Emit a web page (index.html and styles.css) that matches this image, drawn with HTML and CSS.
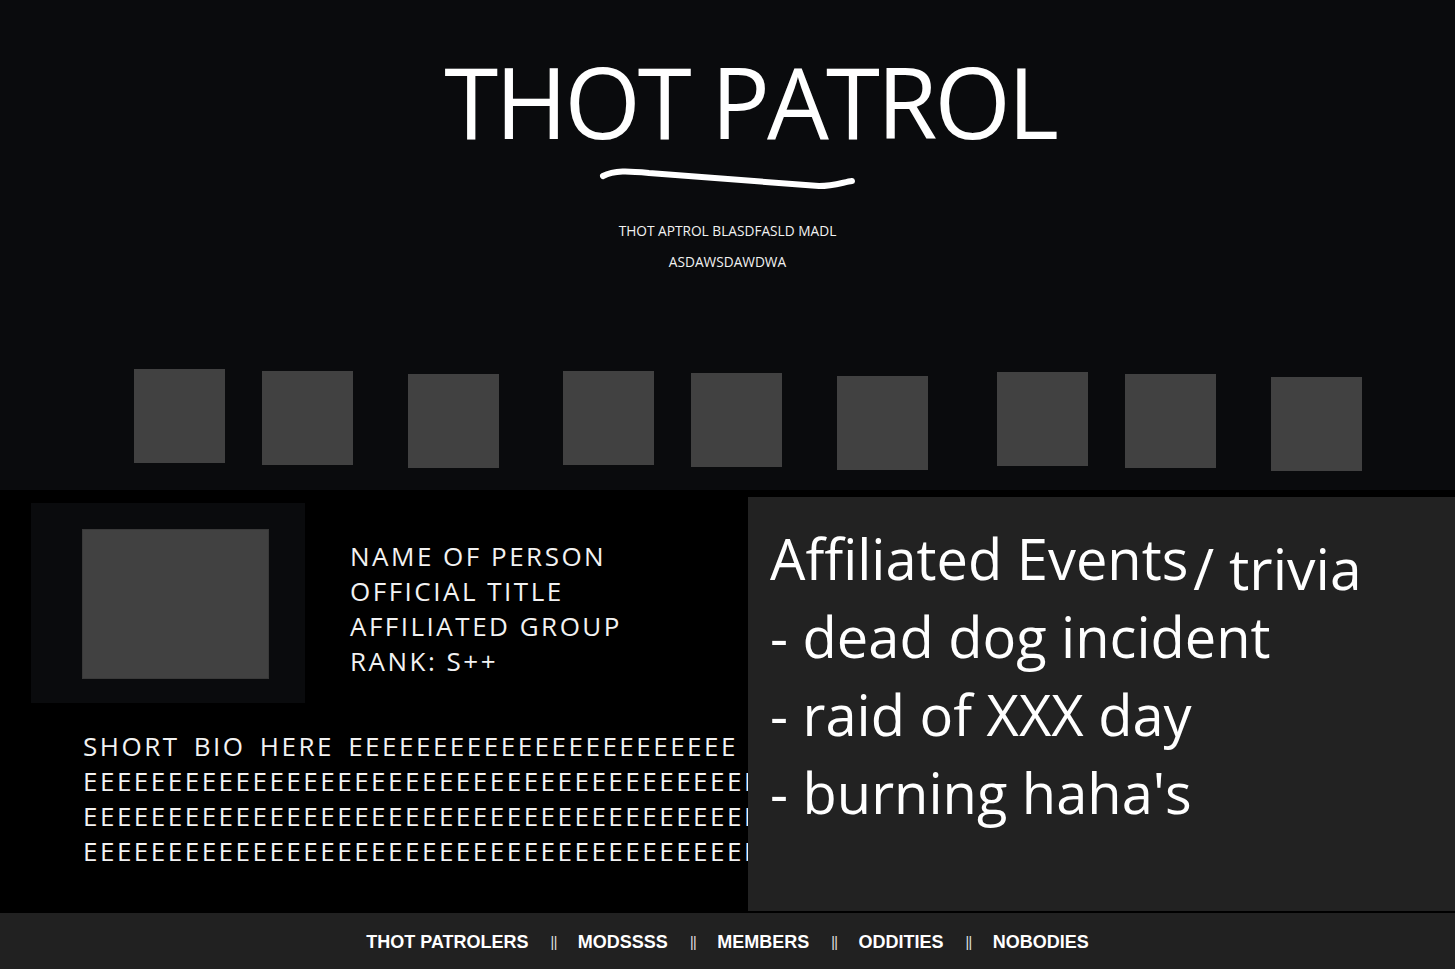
FILE: index.html
```html
<!DOCTYPE html>
<html lang="en">
<head>
<meta charset="utf-8">
<title>THOT PATROL</title>
<link rel="stylesheet" href="styles.css">
</head>
<body>
<header class="hero">
  <h1 class="title">THOT PATROL</h1>
  <svg class="squiggle" width="262" height="28" viewBox="0 0 262 28" aria-hidden="true">
    <path d="M6 10 C17 4 32 5 52 7 L222 20 C237 20 247 16 255 15" fill="none" stroke="#ffffff" stroke-width="6" stroke-linecap="round" stroke-linejoin="round"/>
  </svg>
  <p class="tagline">THOT APTROL BLASDFASLD MADL<br>ASDAWSDAWDWA</p>
  <div class="tiles">
    <div class="tile-group g1"><div class="tile"></div><div class="tile"></div><div class="tile"></div></div>
    <div class="tile-group g2"><div class="tile"></div><div class="tile"></div><div class="tile"></div></div>
    <div class="tile-group g3"><div class="tile"></div><div class="tile"></div><div class="tile"></div></div>
  </div>
</header>
<main class="profile">
  <section class="person">
    <div class="person-top">
      <div class="photo-frame"><div class="photo"></div></div>
      <div class="info">
        <p>NAME OF PERSON</p>
        <p>OFFICIAL TITLE</p>
        <p>AFFILIATED GROUP</p>
        <p>RANK: S++</p>
      </div>
    </div>
    <div class="bio">
      <p>SHORT BIO HERE EEEEEEEEEEEEEEEEEEEEEEE</p>
      <p>EEEEEEEEEEEEEEEEEEEEEEEEEEEEEEEEEEEEEEEEEEEEE</p>
      <p>EEEEEEEEEEEEEEEEEEEEEEEEEEEEEEEEEEEEEEEEEEEEE</p>
      <p>EEEEEEEEEEEEEEEEEEEEEEEEEEEEEEEEEEEEEEEEEEEEE</p>
    </div>
  </section>
  <aside class="trivia">
    <p>Affiliated Events<span class="sub">/ trivia</span></p>
    <p>- dead dog incident</p>
    <p>- raid of XXX day</p>
    <p>- burning haha's</p>
  </aside>
</main>
<footer class="nav">
  <a class="nav-item">THOT PATROLERS</a><span class="sep">||</span>
  <a class="nav-item">MODSSSS</a><span class="sep">||</span>
  <a class="nav-item">MEMBERS</a><span class="sep">||</span>
  <a class="nav-item">ODDITIES</a><span class="sep">||</span>
  <a class="nav-item">NOBODIES</a>
</footer>
</body>
</html>
```

FILE: styles.css
```css
* { box-sizing: border-box; }

body {
  margin: 0;
  background: #0a0b0d;
  color: #ffffff;
  font-family: "Open Sans", "Noto Sans", sans-serif;
}

.hero {
  height: 490px;
  display: flex;
  flex-direction: column;
  align-items: center;
  background: #0a0b0d;
}

.title {
  margin: 0;
  padding: 52px 0 0 45px;
  font-size: 98px;
  line-height: 98px;
  font-weight: 400;
  letter-spacing: -3px;
  white-space: nowrap;
}

.squiggle {
  display: block;
  margin-top: 16px;
}

.tagline {
  margin: 21px 0 0;
  font-size: 13.7px;
  line-height: 31px;
  text-align: center;
  color: #f2f2f2;
}

.tiles {
  align-self: stretch;
  display: flex;
  align-items: flex-start;
  margin-top: 92px;
  padding-left: 134px;
}

.tile-group {
  display: flex;
  align-items: flex-start;
}

.g2 { margin-left: 64px; margin-top: 2px; }
.g3 { margin-left: 69px; margin-top: 3px; }

.tile {
  width: 91px;
  height: 94px;
  background: #414141;
}

.tile:nth-child(2) { margin-left: 37px; margin-top: 2px; }
.tile:nth-child(3) { margin-left: 55px; margin-top: 5px; }

.profile {
  display: flex;
  height: 423px;
  background: #000000;
}

.person {
  flex: none;
  width: 748px;
  overflow: hidden;
}

.person-top {
  display: flex;
  align-items: flex-start;
  padding: 13px 0 0 31px;
}

.photo-frame {
  width: 274px;
  height: 200px;
  background: #0a0b0d;
  padding: 26px 0 0 51px;
}

.photo {
  width: 187px;
  height: 150px;
  background: #414141;
  border: 1px solid #393939;
}

.info {
  margin-left: 45px;
  padding-top: 36px;
  font-size: 26px;
  line-height: 35px;
  letter-spacing: 2.5px;
  color: #f2f2f2;
}

.info p,
.bio p,
.trivia p {
  margin: 0;
}

.bio {
  margin-top: 26px;
  padding-left: 83px;
  font-size: 26px;
  line-height: 35px;
  letter-spacing: 2.5px;
  word-spacing: 5px;
  color: #f2f2f2;
  white-space: nowrap;
}

.trivia {
  flex: 1;
  margin: 7px 0 2px;
  background: #222222;
  padding: 22px 0 0 22px;
  font-size: 56px;
  line-height: 78px;
  white-space: nowrap;
}

.trivia .sub {
  font-size: 57px;
  line-height: 40px;
  margin-left: 5px;
  vertical-align: -10px;
}

.nav {
  height: 56px;
  background: #212121;
  display: flex;
  justify-content: center;
  align-items: center;
  padding-top: 2px;
  font-family: "Liberation Sans", Arial, sans-serif;
}

.nav-item {
  font-size: 18px;
  font-weight: 700;
  color: #ffffff;
  white-space: nowrap;
}

.sep {
  font-size: 14px;
  letter-spacing: -0.5px;
  color: #e0e0e0;
  padding: 0 21px 0 22px;
  vertical-align: -3px;
}
```
